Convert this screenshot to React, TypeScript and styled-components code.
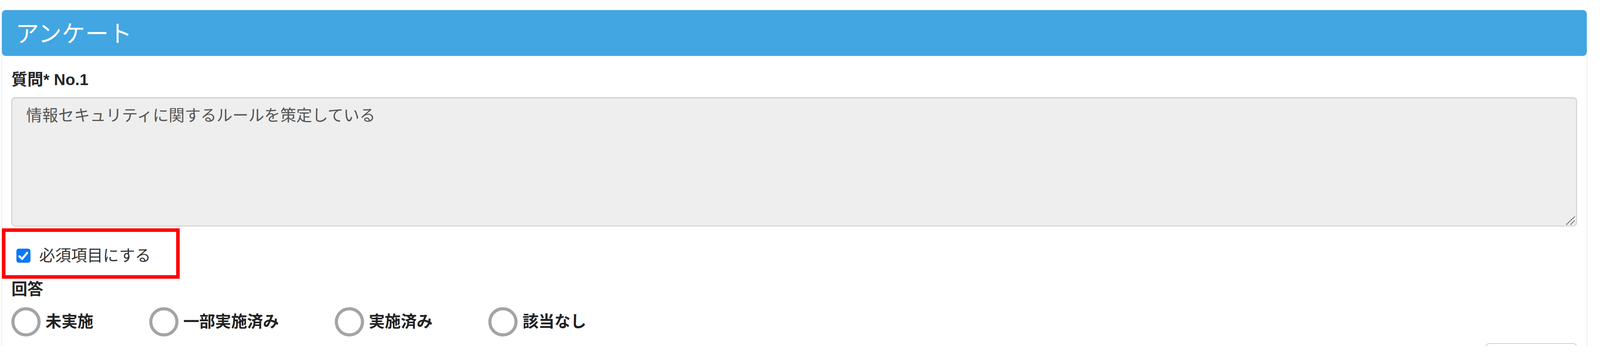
import React from "react";
import styled, { createGlobalStyle } from "styled-components";

const GlobalStyle = createGlobalStyle`
  html, body {
    margin: 0;
    padding: 0;
    background: #ffffff;
  }
  body {
    font-family: "Liberation Sans", "Noto Sans CJK JP", sans-serif;
    color: #333333;
    overflow: hidden;
  }
  * { box-sizing: border-box; }
`;

/* All sizes below are in the reference's 4215px-wide units; the page is
   zoomed at run time so that 4215 units fill the actual window width. */
const Page = styled.div`
  padding: 26px 34px 0 4px;
  height: 912px;
  overflow: hidden;
`;

const PanelHeading = styled.div`
  display: flex;
  align-items: center;
  height: 122px;
  padding: 0 0 6px 36px;
  background: #41a6e2;
  border: 2px solid #d8dde0;
  border-radius: 11px;
`;

const Title = styled.h1`
  margin: 0;
  font-family: "Noto Sans CJK JP", "Liberation Sans", sans-serif;
  font-weight: 400;
  font-size: 62px;
  line-height: 1;
  color: #ffffff;
`;

const PanelBody = styled.div`
  display: flex;
  flex-direction: column;
  align-items: flex-start;
  padding: 37px 26px 0 25px;
  border-left: 2px solid #dcdcdc;
  border-right: 2px solid #dcdcdc;
  min-height: 800px;
`;

const FieldLabel = styled.label<{ $top?: number }>`
  display: block;
  margin-top: ${(p) => p.$top ?? 0}px;
  font-size: 42px;
  line-height: 50px;
  font-weight: 700;
  color: #262626;
`;

const TextAreaWrap = styled.div`
  position: relative;
  width: 100%;
  margin-top: 21px;
`;

const QuestionText = styled.textarea`
  display: block;
  width: 100%;
  height: 341px;
  padding: 17px 37px;
  margin: 0;
  background: #eeeeee;
  border: 3px solid #cbcbcb;
  border-radius: 10px;
  box-shadow: inset 0 2px 3px rgba(0, 0, 0, 0.06);
  font-family: "Liberation Sans", "Noto Sans CJK JP", sans-serif;
  font-size: 42px;
  line-height: 60px;
  color: #555555;
  resize: none;
  outline: none;
`;

const Grip = styled.svg`
  position: absolute;
  right: 4px;
  bottom: 3px;
  width: 26px;
  height: 26px;
`;

const Highlight = styled.div`
  display: flex;
  align-items: center;
  gap: 23px;
  width: 468px;
  height: 133px;
  margin: 5px 0 0 -25px;
  padding: 12px 0 0 29px;
  border: 10px solid #ff0000;
`;

const CheckBox = styled.span`
  display: inline-flex;
  align-items: center;
  justify-content: center;
  width: 37px;
  height: 37px;
  flex: none;
  background: #0b78f7;
  border-radius: 6px;
`;

const CheckLabel = styled.span`
  font-size: 42px;
  line-height: 50px;
  color: #333333;
`;

const RadioRow = styled.div`
  display: flex;
  align-items: center;
  gap: 147px;
  margin-top: 22px;
`;

const RadioItem = styled.label`
  display: flex;
  align-items: center;
  gap: 13px;
`;

const RadioCircle = styled.span`
  display: block;
  width: 77px;
  height: 77px;
  flex: none;
  border: 9px solid #a4a4a4;
  border-radius: 50%;
  background: #ffffff;
`;

const RadioText = styled.span`
  font-size: 42px;
  line-height: 50px;
  font-weight: 700;
  color: #222222;
`;

const Footer = styled.div`
  display: flex;
  justify-content: flex-end;
  width: 100%;
  margin-top: 18px;
`;

const GhostButton = styled.button`
  width: 240px;
  height: 90px;
  background: #ffffff;
  border: 3px solid #d0d0d0;
  border-radius: 10px;
`;

const answers = ["未実施", "一部実施済み", "実施済み", "該当なし"];

export default function App() {
  const scale = typeof window !== "undefined" ? window.innerWidth / 4215 : 1;
  return (
    <>
      <GlobalStyle />
      <Page style={{ zoom: scale }}>
        <PanelHeading>
          <Title>アンケート</Title>
        </PanelHeading>
        <PanelBody>
          <FieldLabel>質問* No.1</FieldLabel>
          <TextAreaWrap>
            <QuestionText readOnly value="情報セキュリティに関するルールを策定している" />
            <Grip viewBox="0 0 26 26">
              <line x1="2" y1="24" x2="24" y2="3" stroke="#5a5a5a" strokeWidth="2.5" strokeDasharray="4 1.5" />
              <line x1="13" y1="24" x2="24" y2="13" stroke="#5a5a5a" strokeWidth="2.5" strokeDasharray="4 1.5" />
            </Grip>
          </TextAreaWrap>
          <Highlight>
            <CheckBox>
              <svg width="28" height="24" viewBox="0 0 28 24">
                <path d="M4 13 L11 20 L24 4" fill="none" stroke="#ffffff" strokeWidth="5.5" strokeLinecap="round" strokeLinejoin="round" />
              </svg>
            </CheckBox>
            <CheckLabel>必須項目にする</CheckLabel>
          </Highlight>
          <FieldLabel $top={3}>回答</FieldLabel>
          <RadioRow>
            {answers.map((a) => (
              <RadioItem key={a}>
                <RadioCircle />
                <RadioText>{a}</RadioText>
              </RadioItem>
            ))}
          </RadioRow>
          <Footer>
            <GhostButton type="button" />
          </Footer>
        </PanelBody>
      </Page>
    </>
  );
}
